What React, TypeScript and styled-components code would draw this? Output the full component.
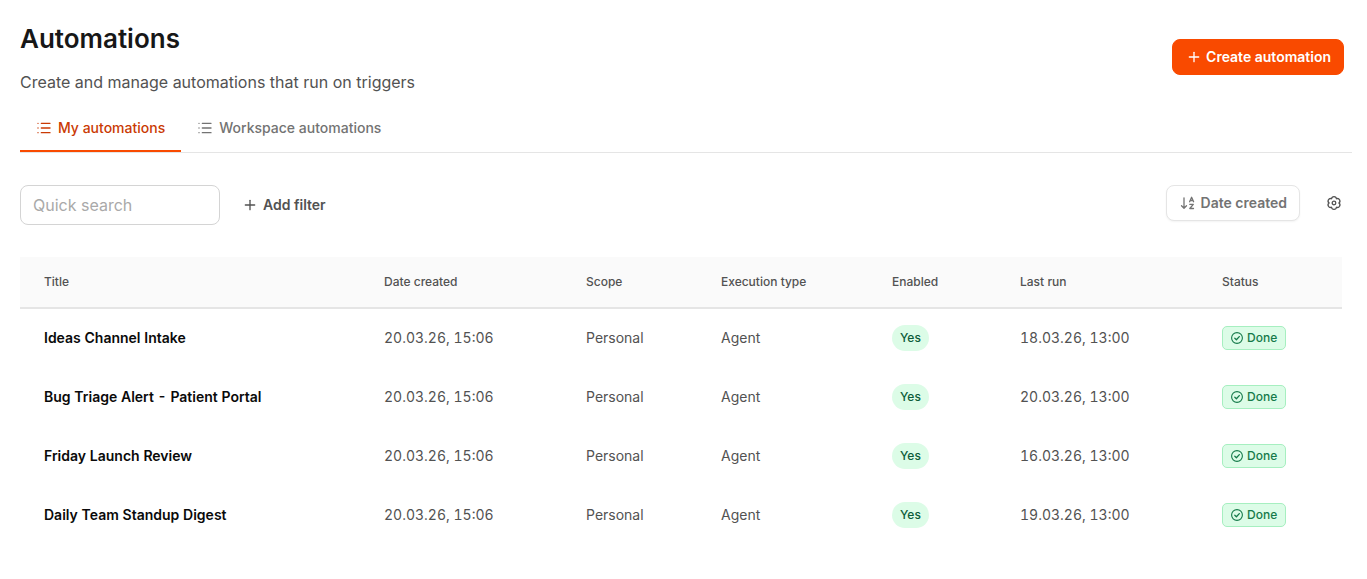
import React from 'react';
import styled, { createGlobalStyle } from 'styled-components';
import { List, Plus } from 'lucide-react';

const GlobalStyle = createGlobalStyle`
  *, *::before, *::after { box-sizing: border-box; }
  body {
    margin: 0;
    background: #fff;
    color: #171717;
    font-family: Inter, 'Liberation Sans', sans-serif;
    font-size: 14px;
    line-height: 20px;
  }
  button, input { font: inherit; }
  svg { flex: none; }
`;

const Page = styled.main`
  padding: 20px 15px 20px 20px;
`;

const Header = styled.header`
  display: flex;
  justify-content: space-between;
  align-items: center;
  padding-right: 8px;
`;

const Title = styled.h1`
  margin: 0;
  font-size: 26px;
  line-height: 38px;
  font-weight: 600;
`;

const Subtitle = styled.p`
  margin: 12px 0 0;
  font-size: 16px;
  line-height: 24px;
  color: #525252;
`;

const Button = styled.button<{ $variant: 'primary' | 'outline' | 'plain' }>`
  display: inline-flex;
  align-items: center;
  gap: ${({ $variant }) => ($variant === 'primary' ? 4 : 5)}px;
  height: 36px;
  padding: 0 12px 0 13px;
  border: 1px solid transparent;
  border-radius: 8px;
  font-weight: 600;
  cursor: pointer;
  ${({ $variant }) =>
    $variant === 'primary'
      ? 'background: #f94a00; border-color: #f94a00; color: #fff;'
      : $variant === 'outline'
        ? 'background: #fff; color: #737373; border-color: #e5e5e5; box-shadow: 0 1px 2px rgba(0, 0, 0, 0.05);'
        : 'background: transparent; color: #525252;'}
`;

const Tabs = styled.div`
  display: flex;
  margin-top: 10px;
  border-bottom: 1px solid #e5e5e5;
`;

const Tab = styled.button<{ $active?: boolean }>`
  display: inline-flex;
  align-items: center;
  gap: 6px;
  height: 48px;
  padding: 2px 16px 0;
  border: 0;
  border-bottom: 2px solid ${({ $active }) => ($active ? '#f94a00' : 'transparent')};
  background: none;
  color: ${({ $active }) => ($active ? '#ca3a04' : '#737373')};
  font-weight: 500;
  cursor: pointer;
`;

const Toolbar = styled.div`
  display: flex;
  justify-content: space-between;
  align-items: flex-start;
  margin-top: 32px;
  padding-right: 8px;
`;

const ToolGroup = styled.div<{ $gap: number }>`
  display: flex;
  align-items: center;
  gap: ${({ $gap }) => $gap}px;
`;

const Search = styled.input`
  width: 200px;
  height: 40px;
  padding: 0 12px;
  border: 1px solid #d4d4d4;
  border-radius: 8px;
  background: #fff;
  font-size: 16px;
  color: #171717;
  &::placeholder { color: #a9a9a9; opacity: 1; }
`;

const IconButton = styled.button`
  display: grid;
  place-items: center;
  width: 20px;
  height: 20px;
  padding: 0;
  border: 0;
  background: none;
  color: #525252;
  cursor: pointer;
`;

const TableArea = styled.div`
  margin-top: 32px;
  padding-right: 10px;
`;

const Table = styled.table`
  width: 100%;
  table-layout: fixed;
  border-collapse: separate;
  border-spacing: 0;
  text-align: left;
  font-variant-numeric: tabular-nums;
`;

const HeadCell = styled.th<{ $share: number }>`
  width: ${({ $share }) => $share}%;
  height: 52px;
  padding: 0 0 0 24px;
  background: #fafafa;
  border-bottom: 2px solid #e5e5e5;
  color: #525252;
  font-size: 12px;
  line-height: 16px;
  font-weight: 500;
`;

const Cell = styled.td<{ $strong?: boolean }>`
  height: 59px;
  padding: 0 0 2px 24px;
  color: ${({ $strong }) => ($strong ? '#0a0a0a' : '#525252')};
  font-weight: ${({ $strong }) => ($strong ? 600 : 400)};
`;

const Pill = styled.span`
  display: inline-flex;
  align-items: center;
  height: 26px;
  padding: 0 8px;
  border-radius: 13px;
  background: #dcfce7;
  color: #0d5c3a;
  font-size: 12px;
  font-weight: 500;
  vertical-align: middle;
`;

const Status = styled.span`
  display: inline-flex;
  align-items: center;
  gap: 4px;
  height: 24px;
  padding: 0 8px;
  border: 1px solid #a6efc0;
  border-radius: 5px;
  background: #dcfce7;
  color: #157a4a;
  font-size: 12px;
  font-weight: 500;
  vertical-align: middle;
`;

const SortIcon = () => (
  <svg width="16" height="16" viewBox="0 0 16 16" fill="none" stroke="currentColor" strokeWidth="1.3" strokeLinecap="round" strokeLinejoin="round" aria-hidden="true">
    <path d="M4 2.8v10.4M1.5 10.8 4 13.3l2.5-2.5" />
    <path d="M9.6 6.7 11.6 2.3l2 4.4M10.2 5.5h2.8M9.8 9.3h3.5l-3.5 4.2h3.7" />
  </svg>
);

const GearIcon = () => (
  <svg width="16" height="16" viewBox="0 0 16 16" fill="none" stroke="currentColor" strokeWidth="1.3" strokeLinejoin="round" aria-hidden="true">
    <path d="M5.55 3.75A2.47 2.47 0 0 1 10.45 3.75 2.47 2.47 0 0 1 12.9 8 2.47 2.47 0 0 1 10.45 12.25 2.47 2.47 0 0 1 5.55 12.25 2.47 2.47 0 0 1 3.1 8 2.47 2.47 0 0 1 5.55 3.75z" />
    <circle cx="8" cy="8" r="1.8" />
  </svg>
);

const DoneIcon = () => (
  <svg width="12" height="12" viewBox="0 0 12 12" fill="none" stroke="currentColor" strokeWidth="1.1" strokeLinecap="round" strokeLinejoin="round" aria-hidden="true">
    <circle cx="6" cy="6" r="5.4" />
    <path d="M3.8 6.3l1.6 1.5 2.9-3.2" strokeWidth="1.3" />
  </svg>
);

const columns = [
  { label: 'Title', share: 25.72 },
  { label: 'Date created', share: 15.28 },
  { label: 'Scope', share: 10.21 },
  { label: 'Execution type', share: 12.94 },
  { label: 'Enabled', share: 9.68 },
  { label: 'Last run', share: 15.28 },
  { label: 'Status', share: 10.89 },
];

const automations = [
  { title: 'Ideas Channel Intake', lastRun: '18.03.26, 13:00' },
  { title: 'Bug Triage Alert - Patient Portal', lastRun: '20.03.26, 13:00' },
  { title: 'Friday Launch Review', lastRun: '16.03.26, 13:00' },
  { title: 'Daily Team Standup Digest', lastRun: '19.03.26, 13:00' },
];

export default function App() {
  return (
    <>
      <GlobalStyle />
      <Page>
        <Header>
          <div>
            <Title>Automations</Title>
            <Subtitle>Create and manage automations that run on triggers</Subtitle>
          </div>
          <Button type="button" $variant="primary">
            <Plus size={16} strokeWidth={2} />
            Create automation
          </Button>
        </Header>

        <Tabs role="tablist">
          <Tab type="button" role="tab" aria-selected="true" $active>
            <List size={16} strokeWidth={2} />
            My automations
          </Tab>
          <Tab type="button" role="tab" aria-selected="false">
            <List size={16} strokeWidth={2} />
            Workspace automations
          </Tab>
        </Tabs>

        <Toolbar>
          <ToolGroup $gap={8}>
            <Search type="search" placeholder="Quick search" aria-label="Quick search" />
            <Button type="button" $variant="plain">
              <Plus size={16} strokeWidth={2} />
              Add filter
            </Button>
          </ToolGroup>
          <ToolGroup $gap={24}>
            <Button type="button" $variant="outline">
              <SortIcon />
              Date created
            </Button>
            <IconButton type="button" aria-label="Settings">
              <GearIcon />
            </IconButton>
          </ToolGroup>
        </Toolbar>

        <TableArea>
          <Table>
            <thead>
              <tr>
                {columns.map((c) => (
                  <HeadCell key={c.label} scope="col" $share={c.share}>{c.label}</HeadCell>
                ))}
              </tr>
            </thead>
            <tbody>
              {automations.map((a) => (
                <tr key={a.title}>
                  <Cell $strong>{a.title}</Cell>
                  <Cell>20.03.26, 15:06</Cell>
                  <Cell>Personal</Cell>
                  <Cell>Agent</Cell>
                  <Cell><Pill>Yes</Pill></Cell>
                  <Cell>{a.lastRun}</Cell>
                  <Cell><Status><DoneIcon />Done</Status></Cell>
                </tr>
              ))}
            </tbody>
          </Table>
        </TableArea>
      </Page>
    </>
  );
}
